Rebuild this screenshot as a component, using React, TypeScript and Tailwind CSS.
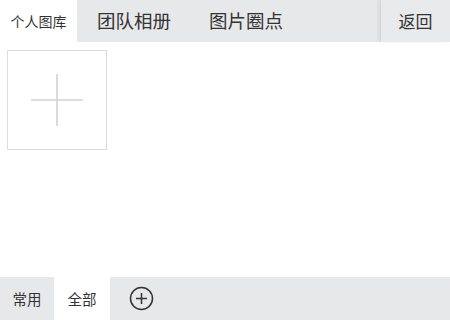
import React from "react";

const font = { fontFamily: '"Noto Sans CJK SC", "Noto Sans", sans-serif' };

export default function App() {
  return (
    <div className="flex h-[320px] w-[450px] flex-col bg-white text-[#333]" style={font}>
      {/* top tabs */}
      <div className="flex h-[42px] shrink-0 items-stretch bg-[#e7e8ea]">
        <div className="flex w-[77px] items-center justify-center bg-white text-[14px]">个人图库</div>
        <div className="flex items-center pl-[20px] text-[18.5px]">团队相册</div>
        <div className="flex items-center pl-[38px] text-[18.5px]">图片圈点</div>
        <div className="flex-1" />
        <div className="flex w-[70px] items-center justify-center border-l border-[#d6d7d9] bg-[#e9eaec] text-[17px] shadow-[-2px_0_3px_rgba(0,0,0,0.06)]">
          返回
        </div>
      </div>

      {/* content */}
      <div className="flex-1 px-[7px] pt-[8px]">
        <div className="flex h-[100px] w-[100px] items-center justify-center border border-[#dcdcdc]">
          <svg width="52" height="52" viewBox="0 0 52 52">
            <path d="M26 0V52M0 26H52" stroke="#d2d2d2" strokeWidth="1.6" />
          </svg>
        </div>
      </div>

      {/* bottom tabs */}
      <div className="flex h-[43px] shrink-0 items-stretch bg-[#e7e8ea] text-[14.5px]">
        <div className="flex w-[54px] items-center justify-center">常用</div>
        <div className="flex w-[56px] items-center justify-center bg-white">全部</div>
        <div className="flex w-[62px] items-center justify-center">
          <svg width="25" height="25" viewBox="0 0 25 25" fill="none" stroke="#333" strokeWidth="1.5">
            <circle cx="12.5" cy="12.5" r="11" />
            <path d="M12.5 7V18M7 12.5H18" />
          </svg>
        </div>
      </div>
    </div>
  );
}
